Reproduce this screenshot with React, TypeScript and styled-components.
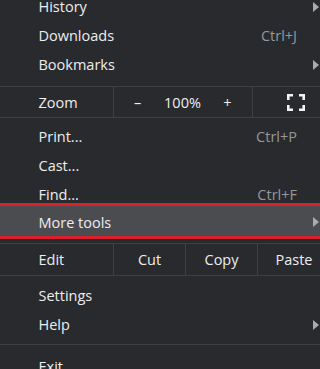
import React from "react";
import styled, { createGlobalStyle } from "styled-components";

const Global = createGlobalStyle`
  html, body { margin: 0; padding: 0; background: #292a2d; overflow: hidden; }
  body { width: 320px; height: 369px; }
`;

const Menu = styled.div`
  width: 330px;
  margin-top: -8px;
  background: #292a2d;
  font-family: "Open Sans", "Noto Sans", sans-serif;
  font-size: 14.5px;
  color: #eceef0;
  display: flex;
  flex-direction: column;
`;

const Item = styled.div<{ $h?: number; $pt?: number }>`
  height: ${(p) => p.$h ?? 29}px;
  padding: ${(p) => p.$pt ?? 0}px 0 0 38.5px;
  box-sizing: border-box;
  display: flex;
  align-items: center;
`;

const Label = styled.span`
  flex: 1;
`;

const Shortcut = styled.span`
  color: #95989c;
  margin-right: 33px;
`;

const Arrow = styled.span`
  width: 0;
  height: 0;
  border-top: 5px solid transparent;
  border-bottom: 5px solid transparent;
  border-left: 6px solid #a9abae;
  margin-right: 11px;
`;

const Highlight = styled(Item)`
  background: #4b4c50;
  border-top: 3px solid #d9202d;
  border-bottom: 3px solid #d9202d;
  margin-top: -6px;
`;

const Gap = styled.div<{ $h: number }>`
  height: ${(p) => p.$h}px;
`;

const Separator = styled.div`
  height: 1px;
  background: #3f4043;
`;

const SplitRow = styled.div<{ $h: number }>`
  height: ${(p) => p.$h}px;
  display: grid;
  grid-template-columns: 113px 1px 1fr;
  align-items: stretch;
`;

const RowLabel = styled.div`
  display: flex;
  align-items: center;
  padding-left: 38.5px;
`;

const VLine = styled.div`
  width: 1px;
  background: #3f4043;
`;

const ZoomControls = styled.div`
  display: grid;
  grid-template-columns: 138px 1px 1fr;
`;

const ZoomButtons = styled.div`
  display: grid;
  grid-template-columns: 45px 45px 45px;
  padding-left: 1px;
  align-items: center;
  justify-items: center;
`;

const Cell = styled.div`
  display: flex;
  align-items: center;
  justify-content: center;
`;

const EditCells = styled.div`
  display: grid;
  grid-template-columns: 71px 1px 71px 1px 1fr;
`;

const FullIcon = styled.svg`
  margin-left: 9px;
`;

const Fullscreen = () => (
  <FullIcon width="18" height="17" viewBox="0 0 18 17">
    <g fill="none" stroke="#f2f3f4" strokeWidth="2.6" strokeLinecap="butt">
      <path d="M1.3 6V1.3H6" />
      <path d="M12 1.3H16.7V6" />
      <path d="M16.7 11V15.7H12" />
      <path d="M6 15.7H1.3V11" />
    </g>
  </FullIcon>
);

export default function App() {
  return (
    <>
      <Global />
      <Menu>
        <Item>
          <Label>History</Label>
          <Arrow />
        </Item>
        <Item>
          <Label>Downloads</Label>
          <Shortcut>Ctrl+J</Shortcut>
        </Item>
        <Item>
          <Label>Bookmarks</Label>
          <Arrow />
        </Item>
        <Gap $h={7} />
        <Separator />
        <SplitRow $h={30}>
          <RowLabel>Zoom</RowLabel>
          <VLine />
          <ZoomControls>
            <ZoomButtons>
              <span>–</span>
              <span>100%</span>
              <span>+</span>
            </ZoomButtons>
            <VLine />
            <Cell>
              <Fullscreen />
            </Cell>
          </ZoomControls>
        </SplitRow>
        <Separator />
        <Gap $h={4} />
        <Item>
          <Label>Print...</Label>
          <Shortcut>Ctrl+P</Shortcut>
        </Item>
        <Item>
          <Label>Cast...</Label>
        </Item>
        <Item>
          <Label>Find...</Label>
          <Shortcut>Ctrl+F</Shortcut>
        </Item>
        <Highlight $h={36} $pt={2}>
          <Label>More tools</Label>
          <Arrow />
        </Highlight>
        <Gap $h={4} />
        <Separator />
        <SplitRow $h={31}>
          <RowLabel>Edit</RowLabel>
          <VLine />
          <EditCells>
            <Cell>Cut</Cell>
            <VLine />
            <Cell>Copy</Cell>
            <VLine />
            <Cell>Paste</Cell>
          </EditCells>
        </SplitRow>
        <Separator />
        <Gap $h={5} />
        <Item>
          <Label>Settings</Label>
        </Item>
        <Item>
          <Label>Help</Label>
          <Arrow />
        </Item>
        <Gap $h={5} />
        <Separator />
        <Gap $h={7} />
        <Item>
          <Label>Exit</Label>
        </Item>
      </Menu>
    </>
  );
}
